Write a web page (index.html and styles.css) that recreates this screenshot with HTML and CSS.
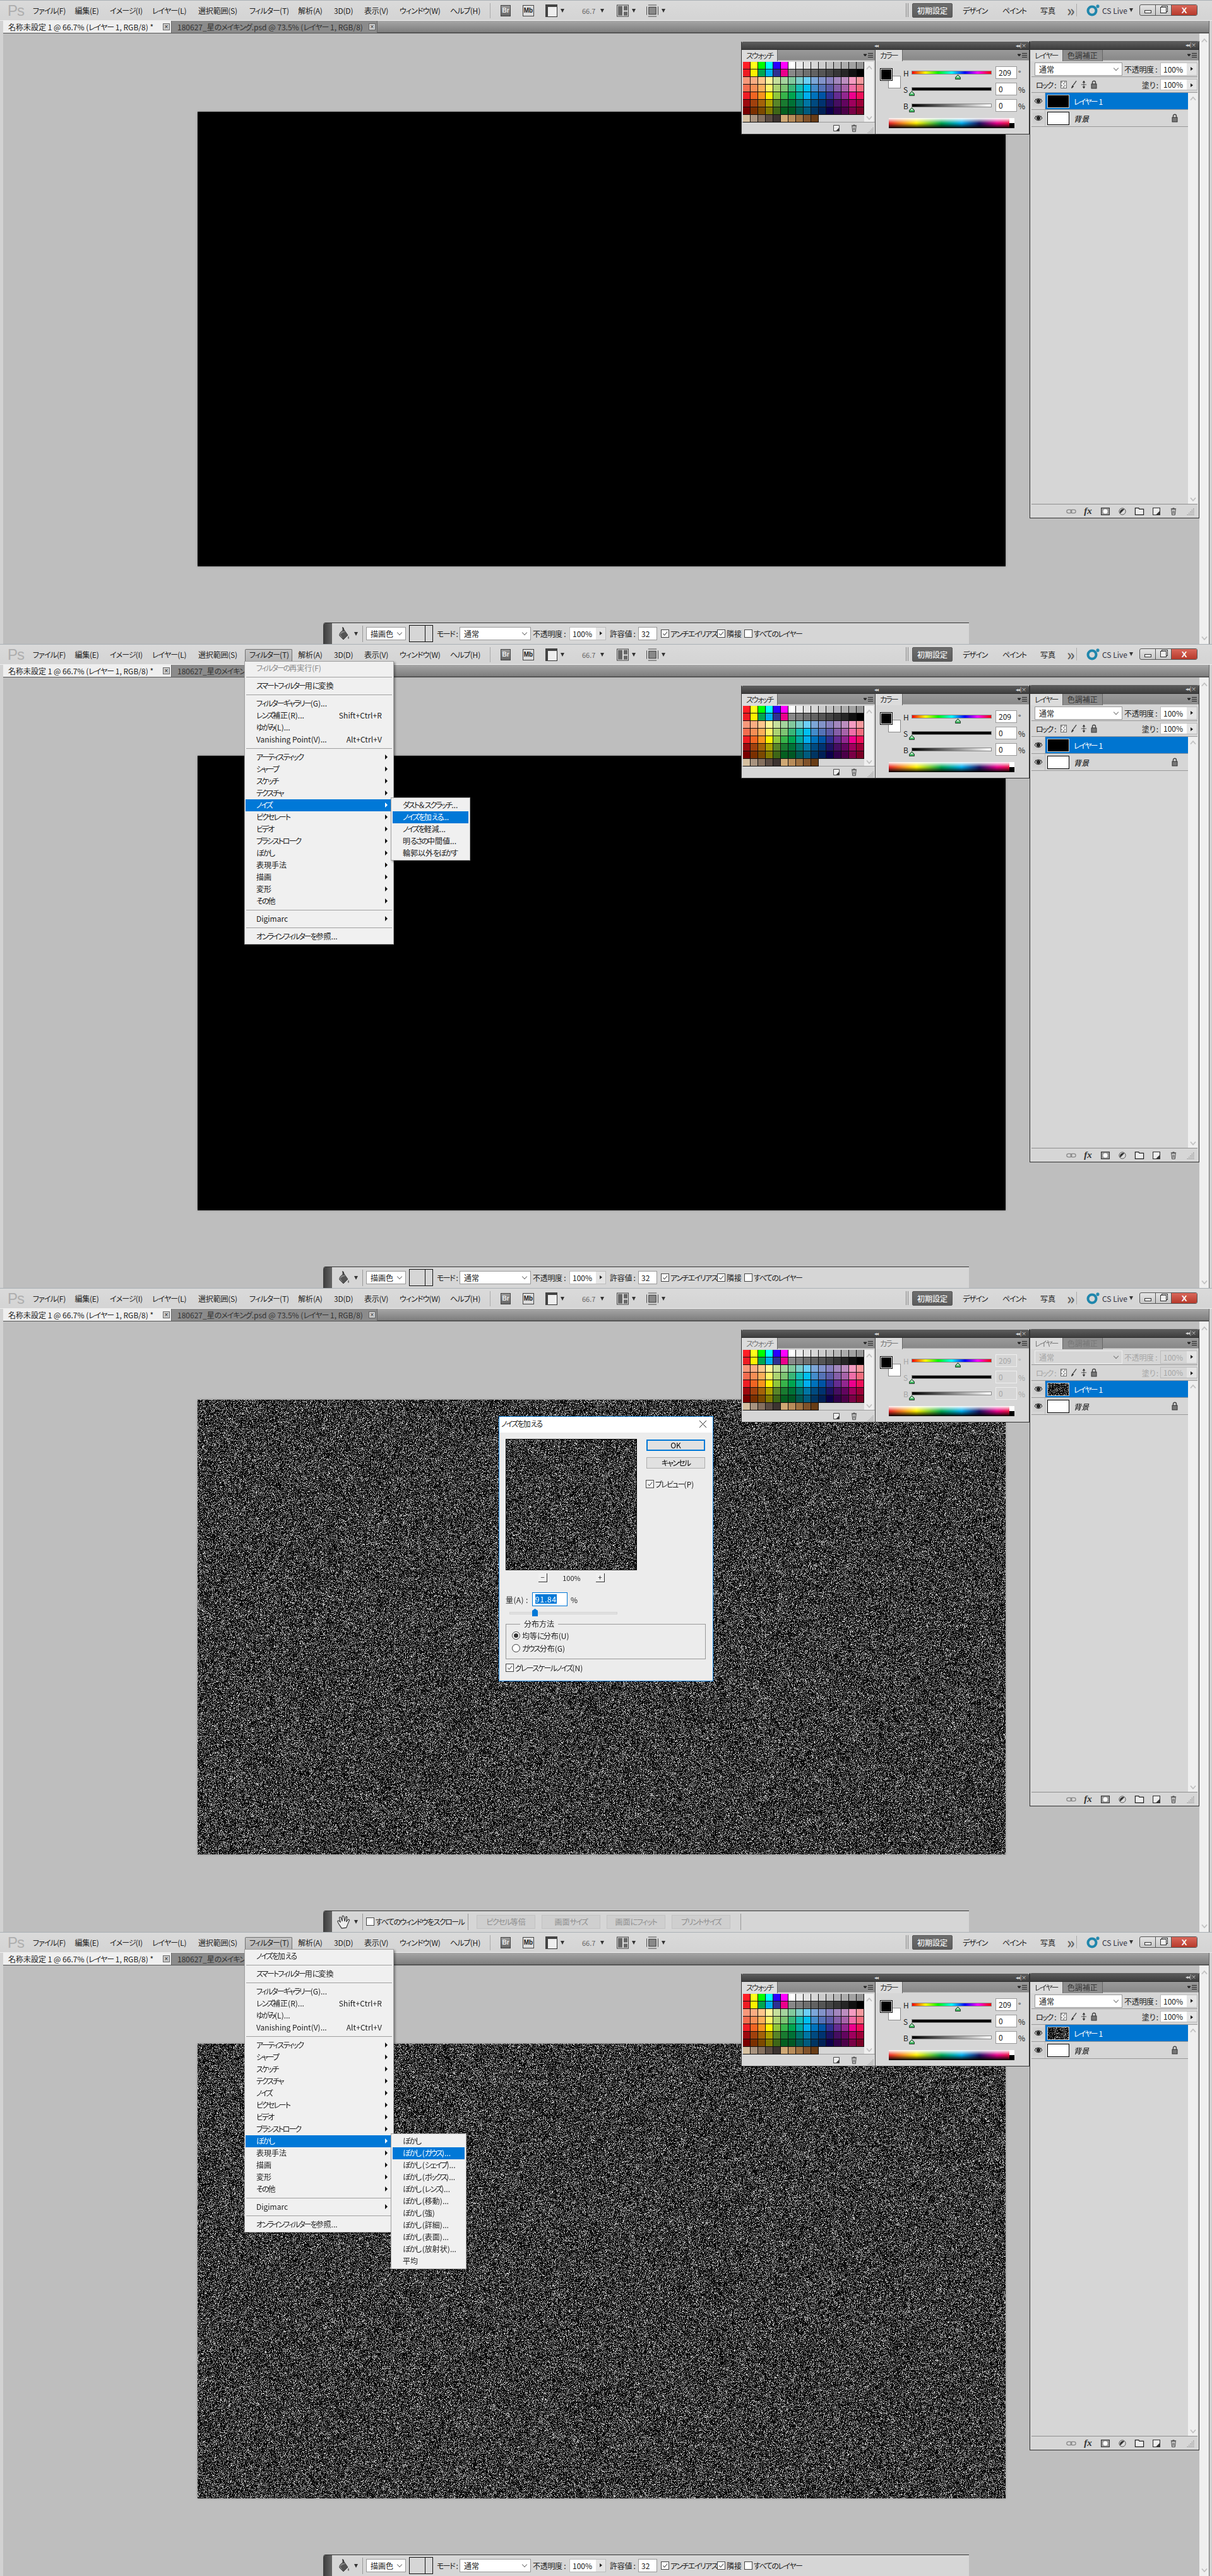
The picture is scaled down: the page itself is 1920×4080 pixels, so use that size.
FILE: index.html
```html
<!DOCTYPE html>
<html lang="ja">
  <head>
    <meta charset="UTF-8" />
    <title>Photoshop ノイズ</title>
    <link rel="stylesheet" href="styles.css">
  </head>
  <body>
    <!-- shared icons -->
    <svg class="icon-defs" width="0" height="0">
      <symbol id="i-bucket" viewBox="0 0 20 24">
        <path d="M9 2 L12 7 L17 14 L10 21 L4 15 C3 12 6 8 9 7 Z" fill="#8b8b8b" stroke="#333" />
        <path d="M5 13 C8 10 11 9 13 9 L17 14 L10 21 Z" fill="#555" />
        <path d="M8 2 C10 1 11 3 10 8" fill="none" stroke="#222" />
        <path d="M18 15 C19 17 20 19 18 20 C16 19 17 17 18 15 Z" fill="#777" />
      </symbol>
      <symbol id="i-hand" viewBox="0 0 24 24">
        <path d="M7 20 C5 17 2 13 2 11 C3 9 5 10 7 13 L5 5 C5 3 7 3 8 5 L10 11 L10 3 C10 1 12 1 13 3 L14 11 L16 4 C17 2 19 3 18 5 L17 12 L20 8 C22 7 23 9 22 10 C20 14 19 18 17 22 L9 23 Z" fill="#eee" stroke="#333" stroke-width="1.2" />
      </symbol>
      <symbol id="i-eye" viewBox="0 0 14 14">
        <path d="M1 7 C4 2 10 2 13 7 C10 12 4 12 1 7 Z" fill="#bbb" stroke="#222" />
        <circle cx="7" cy="7" r="3" fill="#222" />
        <path d="M2 4 L4 5 M12 4 L10 5" stroke="#222" />
      </symbol>
      <symbol id="i-lock" viewBox="0 0 10 14">
        <path d="M2.5 6 V3.5 C2.5 0.5 7.5 0.5 7.5 3.5 V6" fill="none" stroke="#444" stroke-width="1.4" />
        <rect x="1" y="6" width="8" height="7" fill="#777" stroke="#333" />
      </symbol>
      <symbol id="i-brush" viewBox="0 0 12 16">
        <path d="M11 1 L5 9" stroke="#444" stroke-width="1.6" />
        <path d="M4 9 L6 11 C5 14 3 15 1 15 C2 13 2 11 4 9 Z" fill="#333" />
      </symbol>
      <symbol id="i-move" viewBox="0 0 12 16">
        <path d="M6 1 L6 15 M1 8 L11 8 M6 1 L4 4 L8 4 Z M6 15 L4 12 L8 12 Z" fill="#333" stroke="#333" />
      </symbol>
      <symbol id="i-link" viewBox="0 0 18 10">
        <rect x="1" y="2" width="9" height="6" rx="3" fill="none" stroke="#888" stroke-width="1.4" />
        <rect x="8" y="2" width="9" height="6" rx="3" fill="none" stroke="#888" stroke-width="1.4" />
      </symbol>
      <symbol id="i-mask" viewBox="0 0 14 12">
        <rect x="0.5" y="0.5" width="13" height="11" fill="#999" stroke="#333" />
        <circle cx="7" cy="6" r="3.5" fill="#fff" />
      </symbol>
      <symbol id="i-adjust" viewBox="0 0 14 14">
        <circle cx="7" cy="7" r="6" fill="#ddd" stroke="#444" />
        <path d="M11 3 A6 6 0 0 0 3 11 Z" fill="#333" />
      </symbol>
      <symbol id="i-folder" viewBox="0 0 12 10">
        <path d="M0.5 9.5 V0.5 H5 L6 2 H11.5 V9.5 Z" fill="#eee" stroke="#222" />
      </symbol>
      <symbol id="i-new" viewBox="0 0 11 11">
        <path d="M0.5 0.5 H10.5 V10.5 H0.5 Z" fill="#eee" stroke="#333" />
        <path d="M5 10 L10 5 V10 Z" fill="#333" />
      </symbol>
      <symbol id="i-trash" viewBox="0 0 11 13">
        <path d="M2 3 H9 L8 12.5 H3 Z" fill="#eee" stroke="#333" />
        <path d="M1 2 H10 M4 1 H7 M4.5 5 V11 M6.5 5 V11" stroke="#333" />
      </symbol>
      <symbol id="i-grip" viewBox="0 0 10 10">
        <path d="M9 1 V2 M7 3 V4 M9 3 V4 M5 5 V6 M7 5 V6 M9 5 V6 M3 7 V8 M5 7 V8 M7 7 V8 M9 7 V8 M1 9 V10 M3 9 V10 M5 9 V10 M7 9 V10 M9 9 V10" stroke="#888" />
      </symbol>
      <symbol id="i-up" viewBox="0 0 10 6"><path d="M1 5.5 L5 1 L9 5.5" fill="none" stroke="#c2c2c2" stroke-width="1.8" /></symbol>
      <symbol id="i-down" viewBox="0 0 10 6"><path d="M1 0.5 L5 5 L9 0.5" fill="none" stroke="#c2c2c2" stroke-width="1.8" /></symbol>
      <symbol id="i-thumb" viewBox="0 0 9 8"><path d="M4.5 0.5 L8.5 4.5 V7.5 H0.5 V4.5 Z" fill="#38b35a" stroke="#222" stroke-width="0.8" /><path d="M4.5 2 L7 4.5 H2 Z" fill="#eee" /></symbol>
      <symbol id="i-check" viewBox="0 0 13 13"><path d="M2.5 6.5 L5.5 9.5 L11 3" fill="none" stroke="#444" stroke-width="1.2" /></symbol>
      <symbol id="i-panel-menu" viewBox="0 0 16 8"><path d="M0 2 H5 L2.5 5 Z M7 0.5 H15 M7 3.5 H15 M7 6.5 H15" fill="#222" stroke="#222" stroke-width="1" /></symbol>
      <symbol id="i-layout" viewBox="0 0 19 19">
        <rect x="0.5" y="0.5" width="18" height="18" fill="#ddd" stroke="#444" />
        <rect x="2" y="2" width="7" height="15" fill="#666" />
        <rect x="11" y="2" width="6" height="7" fill="#666" />
        <rect x="11" y="11" width="6" height="6" fill="#666" />
      </symbol>
      <symbol id="i-view" viewBox="0 0 20 20">
        <path d="M3 0.5 H17 M3 19.5 H17 M0.5 3 V17 M19.5 3 V17" stroke="#444" />
        <rect x="4" y="4" width="12" height="12" fill="#888" stroke="#333" />
      </symbol>
      <symbol id="i-screen" viewBox="0 0 19 20">
        <rect x="0.5" y="3.5" width="18" height="16" fill="#eee" stroke="#333" />
        <path d="M0 0 H19 V4 H0 Z M0 4 H4 V20 H0 Z" fill="#444" />
      </symbol>
      <symbol id="i-cslive" viewBox="0 0 22 20">
        <circle cx="9" cy="11" r="6.5" fill="none" stroke="#1f86ac" stroke-width="4" />
        <path d="M18 1 V7 M15 4 H21 M16 2 L20 6 M20 2 L16 6" stroke="#1f86ac" stroke-width="1.2" />
      </symbol>
    </svg>

    <!-- window chrome used by all four shots -->
    <template id="ps-shell">
      <header class="menu-bar">
        <div class="ps-logo">Ps</div>
        <nav class="menu-list">
          <span class="menu-item">ファイル(F)</span>
          <span class="menu-item">編集(E)</span>
          <span class="menu-item">イメージ(I)</span>
          <span class="menu-item">レイヤー(L)</span>
          <span class="menu-item">選択範囲(S)</span>
          <span class="menu-item" data-menu="filter">フィルター(T)</span>
          <span class="menu-item">解析(A)</span>
          <span class="menu-item">3D(D)</span>
          <span class="menu-item">表示(V)</span>
          <span class="menu-item">ウィンドウ(W)</span>
          <span class="menu-item">ヘルプ(H)</span>
        </nav>
        <div class="app-tools">
          <span class="app-badge">Br</span>
          <span class="app-badge app-badge-light">Mb</span>
          <span class="app-tool"><svg class="tool-glyph"><use href="#i-screen" /></svg><i class="caret"></i></span>
          <span class="app-tool zoom-value">66.7<i class="caret"></i></span>
          <span class="app-tool"><svg class="tool-glyph"><use href="#i-layout" /></svg><i class="caret"></i></span>
          <span class="app-tool"><svg class="tool-glyph"><use href="#i-view" /></svg><i class="caret"></i></span>
        </div>
        <div class="workspace-switch">
          <span class="grip-bars"></span>
          <span class="workspace-current">初期設定</span>
          <span class="workspace-name">デザイン</span>
          <span class="workspace-name">ペイント</span>
          <span class="workspace-name">写真</span>
          <span class="workspace-more">»</span>
          <span class="cs-live"><svg class="cs-icon"><use href="#i-cslive" /></svg>CS Live<i class="caret"></i></span>
          <div class="win-buttons">
            <span class="win-btn"><i class="win-min"></i></span>
            <span class="win-btn"><i class="win-restore"></i></span>
            <span class="win-btn win-close">X</span>
          </div>
        </div>
      </header>

      <div class="doc-area">
        <div class="tab-bar">
          <span class="doc-tab doc-tab-active">名称未設定 1 @ 66.7% (レイヤー 1, RGB/8) * <i class="tab-x">×</i></span>
          <span class="doc-tab">180627_星のメイキング.psd @ 73.5% (レイヤー 1, RGB/8) <i class="tab-x">×</i></span>
        </div>
        <div class="workspace">
          <div class="canvas-area">
            <canvas class="doc-canvas" width="1280" height="720"></canvas>
          </div>
          <div class="v-scroll">
            <svg class="chev"><use href="#i-up" /></svg>
            <svg class="chev"><use href="#i-down" /></svg>
          </div>
        </div>
      </div>

      <!-- swatches + colour -->
      <aside class="panel-dock">
        <div class="panel-head"><span class="collapse">◂◂</span><span class="collapse dock-close">◂◂ | ×</span></div>
        <div class="dock-body">
          <section class="swatch-panel">
            <div class="panel-tabs">
              <span class="panel-tab">スウォッチ</span>
              <svg class="panel-menu"><use href="#i-panel-menu" /></svg>
            </div>
            <div class="swatch-main">
              <div class="swatch-grid"></div>
              <div class="swatch-scroll">
                <svg class="chev"><use href="#i-up" /></svg>
                <svg class="chev"><use href="#i-down" /></svg>
              </div>
            </div>
            <div class="swatch-foot">
              <svg class="foot-icon"><use href="#i-new" /></svg>
              <svg class="foot-icon"><use href="#i-trash" /></svg>
              <svg class="foot-grip"><use href="#i-grip" /></svg>
            </div>
          </section>
          <section class="color-panel">
            <div class="panel-tabs">
              <span class="panel-tab">カラー</span>
              <svg class="panel-menu"><use href="#i-panel-menu" /></svg>
            </div>
            <div class="color-main">
              <div class="color-chips"><i class="chip-bg"></i><i class="chip-fg"></i></div>
              <div class="color-rows">
                <span class="dim-label">H</span>
                <div class="track track-h"><svg class="track-thumb thumb-h"><use href="#i-thumb" /></svg></div>
                <span class="num-box dim-label">209</span><span class="dim-label">°</span>
                <span class="dim-label">S</span>
                <div class="track track-s"><svg class="track-thumb"><use href="#i-thumb" /></svg></div>
                <span class="num-box dim-label">0</span><span class="dim-label">%</span>
                <span class="dim-label">B</span>
                <div class="track track-b"><svg class="track-thumb"><use href="#i-thumb" /></svg></div>
                <span class="num-box dim-label">0</span><span class="dim-label">%</span>
              </div>
            </div>
            <div class="spectrum"><i class="spectrum-end"></i></div>
          </section>
        </div>
      </aside>

      <!-- layers -->
      <aside class="layers-panel">
        <div class="panel-head"><span class="collapse dock-close">◂◂ | ×</span></div>
        <div class="panel-tabs">
          <span class="panel-tab">レイヤー</span>
          <span class="panel-tab panel-tab-off">色調補正</span>
          <svg class="panel-menu"><use href="#i-panel-menu" /></svg>
        </div>
        <div class="layer-controls">
          <span class="field field-blend dim-label">通常<i class="select-arrow"></i></span>
          <span class="dim-label opacity-label">不透明度 :</span>
          <span class="spin"><b class="dim-label">100%</b><i></i></span>
        </div>
        <div class="layer-locks">
          <span class="dim-label">ロック :</span>
          <i class="lock-pixels"></i>
          <svg class="lock-icon"><use href="#i-brush" /></svg>
          <svg class="lock-icon"><use href="#i-move" /></svg>
          <svg class="lock-icon"><use href="#i-lock" /></svg>
          <span class="dim-label fill-label">塗り :</span>
          <span class="spin"><b class="dim-label">100%</b><i></i></span>
        </div>
        <div class="layer-list">
          <div class="layer-rows">
            <div class="layer-row layer-row-active">
              <span class="layer-eye"><svg><use href="#i-eye" /></svg></span>
              <div class="layer-main">
                <canvas class="layer-thumb" width="33" height="19"></canvas>
                <span class="layer-name">レイヤー 1</span>
              </div>
            </div>
            <div class="layer-row">
              <span class="layer-eye"><svg><use href="#i-eye" /></svg></span>
              <div class="layer-main">
                <span class="layer-thumb layer-thumb-white"></span>
                <span class="layer-name">背景</span>
                <svg class="layer-lock"><use href="#i-lock" /></svg>
              </div>
            </div>
          </div>
          <div class="list-scroll">
            <svg class="chev"><use href="#i-up" /></svg>
            <svg class="chev"><use href="#i-down" /></svg>
          </div>
        </div>
        <div class="layers-foot">
          <svg><use href="#i-link" /></svg>
          <span class="fx-mark">fx</span>
          <svg><use href="#i-mask" /></svg>
          <svg><use href="#i-adjust" /></svg>
          <svg><use href="#i-folder" /></svg>
          <svg><use href="#i-new" /></svg>
          <svg><use href="#i-trash" /></svg>
          <svg><use href="#i-grip" /></svg>
        </div>
      </aside>
    </template>

    <!-- floating option bars -->
    <template id="opt-bucket">
      <div class="option-bar">
        <span class="opt-grip"></span>
        <span class="opt-tool"><svg><use href="#i-bucket" /></svg><i class="caret"></i></span>
        <span class="opt-sep"></span>
        <span class="field opt-source">描画色<i class="select-arrow"></i></span>
        <span class="opt-pattern"><i></i></span>
        <span class="opt-label opt-mode">モード :</span>
        <span class="field opt-blend">通常<i class="select-arrow"></i></span>
        <span class="opt-label opt-opacity">不透明度 :</span>
        <span class="spin opt-spin"><b>100%</b><i></i></span>
        <span class="opt-label opt-tol">許容値 :</span>
        <span class="field opt-num">32</span>
        <span class="opt-check opt-anti"><i class="check-box is-on"><svg><use href="#i-check" /></svg></i>アンチエイリアス</span>
        <span class="opt-check opt-adj"><i class="check-box is-on"><svg><use href="#i-check" /></svg></i>隣接</span>
        <span class="opt-check opt-all"><i class="check-box"></i>すべてのレイヤー</span>
      </div>
    </template>
    <template id="opt-hand">
      <div class="option-bar">
        <span class="opt-grip"></span>
        <span class="opt-tool"><svg><use href="#i-hand" /></svg><i class="caret"></i></span>
        <span class="opt-sep"></span>
        <span class="opt-check opt-scroll"><i class="check-box"></i>すべてのウィンドウをスクロール</span>
        <span class="opt-sep opt-sep-wide"></span>
        <span class="opt-btn">ピクセル等倍</span>
        <span class="opt-btn">画面サイズ</span>
        <span class="opt-btn">画面にフィット</span>
        <span class="opt-btn">プリントサイズ</span>
        <span class="opt-sep opt-sep-end"></span>
      </div>
    </template>

    <!-- フィルター menu -->
    <template id="filter-menu">
      <div class="pop-menu filter-menu">
        <div class="pop-item last-filter"></div>
        <div class="pop-sep"></div>
        <div class="pop-item">スマートフィルター用に変換</div>
        <div class="pop-sep"></div>
        <div class="pop-item">フィルターギャラリー(G)...</div>
        <div class="pop-item">レンズ補正(R)...<span class="shortcut">Shift+Ctrl+R</span></div>
        <div class="pop-item">ゆがみ(L)...</div>
        <div class="pop-item">Vanishing Point(V)...<span class="shortcut">Alt+Ctrl+V</span></div>
        <div class="pop-sep"></div>
        <div class="pop-item has-sub">アーティスティック</div>
        <div class="pop-item has-sub">シャープ</div>
        <div class="pop-item has-sub">スケッチ</div>
        <div class="pop-item has-sub">テクスチャ</div>
        <div class="pop-item has-sub">ノイズ</div>
        <div class="pop-item has-sub">ピクセレート</div>
        <div class="pop-item has-sub">ビデオ</div>
        <div class="pop-item has-sub">ブラシストローク</div>
        <div class="pop-item has-sub">ぼかし</div>
        <div class="pop-item has-sub">表現手法</div>
        <div class="pop-item has-sub">描画</div>
        <div class="pop-item has-sub">変形</div>
        <div class="pop-item has-sub">その他</div>
        <div class="pop-sep"></div>
        <div class="pop-item has-sub">Digimarc</div>
        <div class="pop-sep"></div>
        <div class="pop-item">オンラインフィルターを参照...</div>
      </div>
    </template>

    <section class="ps-window" data-tool="opt-bucket"></section>

    <section class="ps-window" data-tool="opt-bucket" data-last-filter="フィルターの再実行(F)" data-last-off="1" data-open="ノイズ">
      <div class="pop-menu sub-menu sub-noise">
        <div class="pop-item">ダスト＆スクラッチ...</div>
        <div class="pop-item is-active">ノイズを加える...</div>
        <div class="pop-item">ノイズを軽減...</div>
        <div class="pop-item">明るさの中間値...</div>
        <div class="pop-item">輪郭以外をぼかす</div>
      </div>
    </section>

    <section class="ps-window is-modal" data-tool="opt-hand" data-noise="1">
      <div class="noise-dialog">
        <div class="dialog-title">ノイズを加える<span class="dialog-x"></span></div>
        <div class="dialog-body">
          <div class="dialog-top">
            <div class="dialog-left">
              <canvas class="noise-preview" width="206" height="206"></canvas>
              <div class="preview-zoom">
                <span class="zoom-btn">−</span><span>100%</span><span class="zoom-btn">+</span>
              </div>
              <div class="amount-row">
                <label class="amount-label">量(A) :</label>
                <span class="amount-input"><b>91.84</b></span>
                <span class="amount-unit">%</span>
              </div>
              <div class="amount-slider"><i></i></div>
            </div>
            <div class="dialog-right">
              <button class="dlg-btn dlg-btn-ok">OK</button>
              <button class="dlg-btn">キャンセル</button>
              <div class="dlg-check"><i class="check-box is-on"><svg><use href="#i-check" /></svg></i>プレビュー(P)</div>
            </div>
          </div>
          <fieldset class="dist-group">
            <legend>分布方法</legend>
            <div class="dlg-radio"><i class="radio is-on"></i>均等に分布(U)</div>
            <div class="dlg-radio"><i class="radio"></i>ガウス分布(G)</div>
          </fieldset>
          <div class="dlg-check dlg-check-gray"><i class="check-box is-on"><svg><use href="#i-check" /></svg></i>グレースケールノイズ(N)</div>
        </div>
      </div>
    </section>

    <section class="ps-window" data-tool="opt-bucket" data-noise="1" data-last-filter="ノイズを加える" data-open="ぼかし">
      <div class="pop-menu sub-menu sub-blur">
        <div class="pop-item">ぼかし</div>
        <div class="pop-item is-active">ぼかし (ガウス)...</div>
        <div class="pop-item">ぼかし (シェイプ)...</div>
        <div class="pop-item">ぼかし (ボックス)...</div>
        <div class="pop-item">ぼかし (レンズ)...</div>
        <div class="pop-item">ぼかし (移動)...</div>
        <div class="pop-item">ぼかし (強)</div>
        <div class="pop-item">ぼかし (詳細)...</div>
        <div class="pop-item">ぼかし (表面)...</div>
        <div class="pop-item">ぼかし (放射状)...</div>
        <div class="pop-item">平均</div>
      </div>
    </section>

    <script src="script.js"></script>
  </body>
</html>
```

FILE: styles.css
```css
* {
  box-sizing: border-box;
  margin: 0;
  padding: 0;
}

body {
  width: 1920px;
  background: #bebebe;
  font-family: 'Noto Sans CJK JP', 'Liberation Sans', sans-serif;
  font-size: 12px;
  font-feature-settings: 'palt';
  color: #222;
}

i {
  font-style: normal;
}

/* kana runs are narrower than kanji in this UI font */
.kana {
  letter-spacing: var(--kana-gap, -1.8px);
}

.icon-defs {
  position: absolute;
}

.ps-window {
  position: relative;
  display: flex;
  flex-direction: column;
  width: 1920px;
  height: 1020px;
  overflow: hidden;
  background: #d2d2d2;
  white-space: nowrap;
}

/* menu bar */
.menu-bar {
  display: flex;
  align-items: center;
  height: 33px;
  background: linear-gradient(#dadada, #d4d4d4);
  border-top: 1px solid #a9b0b5;
  border-bottom: 1px solid #eee;
}

.ps-logo {
  width: 23px;
  margin-left: 12px;
  font-family: 'Liberation Sans', sans-serif;
  font-size: 24px;
  letter-spacing: -1px;
  line-height: 1;
  color: #aeaeae;
}

.menu-list {
  --kana-gap: -0.9px;
  display: grid;
  grid-template-columns: 49px 39px 50px 54px 66px 59px 41px 30px 40px 63px 48px;
  column-gap: 17px;
  margin-left: 17px;
  align-items: center;
  height: 100%;
}

.menu-item {
  position: relative;
  z-index: 0;
  line-height: 31px;
  text-align: center;
  letter-spacing: -0.2px;
}

.menu-item.is-open::before {
  content: '';
  position: absolute;
  z-index: -1;
  top: 7px;
  left: -7px;
  right: -9px;
  height: 19px;
  background: linear-gradient(#c4c4c4, #b4b4b4);
  border: 1px solid #6f6f6f;
  border-bottom: 0;
  border-radius: 2px 2px 0 0;
}

.app-tools {
  display: grid;
  grid-template-columns: 35px 36px 58px 55px 47px 60px;
  margin-left: 15px;
  align-items: center;
  border-left: 1px solid #aaa;
  height: 24px;
  padding-left: 16px;
}

.app-badge {
  width: 16px;
  height: 18px;
  border: 1px solid #444;
  background: linear-gradient(#999, #666);
  color: #e8e8e8;
  font: bold 10px/16px 'Liberation Sans', sans-serif;
  text-align: center;
}

.app-badge-light {
  width: 18px;
  background: #ddd;
  color: #222;
}

.app-tool {
  display: flex;
  align-items: center;
  gap: 5px;
}

.tool-glyph {
  width: 19px;
  height: 20px;
}

.zoom-value {
  color: #666;
  font-size: 11px;
  gap: 8px;
}

.caret {
  display: inline-block;
  border-top: 6px solid #333;
  border-left: 3px solid transparent;
  border-right: 3px solid transparent;
}

.workspace-switch {
  --kana-gap: -1.2px;
  position: absolute;
  left: 1435px;
  top: 0;
  display: grid;
  grid-template-columns: 10px 80px 63px 60px 42px 30px 85px 92px;
  align-items: center;
  height: 32px;
}

.grip-bars {
  width: 4px;
  height: 22px;
  border-left: 1px solid #888;
  border-right: 1px solid #888;
}

.workspace-current {
  width: 64px;
  height: 23px;
  background: linear-gradient(#6e6e6e, #5c5c5c);
  border: 1px solid #555;
  border-radius: 2px;
  color: #f2f2f2;
  text-align: center;
  line-height: 21px;
  font-weight: 500;
}

.workspace-more {
  font-size: 24px;
  line-height: 28px;
  color: #666;
  font-weight: 700;
}

.cs-live {
  display: flex;
  align-items: center;
  gap: 3px;
  padding-left: 15px;
  margin-left: -15px;
  border-left: 1px solid #aaa;
  color: #334;
  font-size: 12px;
}

.cs-icon {
  width: 22px;
  height: 20px;
}

.win-buttons {
  display: flex;
  height: 18px;
  border: 1px solid #555;
  border-radius: 3px;
  overflow: hidden;
  background: linear-gradient(#e4e4e4, #c8c8c8);
}

.win-btn {
  display: flex;
  align-items: center;
  justify-content: center;
  width: 25px;
  border-right: 1px solid #555;
}

.win-min {
  width: 11px;
  height: 5px;
  background: #fff;
  border: 1px solid #333;
  margin-top: 4px;
}

.win-restore {
  width: 10px;
  height: 10px;
  background: #eee;
  border: 1px solid #333;
  box-shadow: 2px -2px 0 -1px #eee, 2px -2px 0 0 #333;
}

.win-close {
  flex: 1;
  border: 0;
  background: linear-gradient(#d9675a, #b73a2c);
  color: #fff;
  font: bold 13px/1 'Liberation Sans', sans-serif;
}

/* document area */
.doc-area {
  display: flex;
  flex-direction: column;
  flex: 1;
  margin: 0 4px 0 5px;
  border-right: 1px solid #666;
}

.tab-bar {
  --kana-gap: -1px;
  display: flex;
  height: 20px;
  background: linear-gradient(#a6a6a6, #7e7e7e);
  border-bottom: 2px solid #555;
  flex: none;
}

.doc-tab {
  display: flex;
  align-items: center;
  padding: 0 2px 0 9px;
  background: #8b8b8b;
  color: #333;
  border-right: 1px solid #666;
  height: 19px;
  width: 326px;
  justify-content: space-between;
  font-size: 12px;
}

.doc-tab-active {
  width: 267px;
  background: #efefef;
  color: #222;
  padding-left: 8px;
}

.tab-x {
  width: 11px;
  height: 11px;
  border: 1px solid #666;
  background: #ccc;
  font: 10px/9px 'Liberation Sans', sans-serif;
  text-align: center;
  letter-spacing: 0;
  flex: none;
}

.workspace {
  display: flex;
  flex: 1;
  min-height: 0;
}

.canvas-area {
  display: flex;
  flex: 1;
  align-items: center;
  justify-content: center;
  background: #bebebe;
}

.doc-canvas {
  display: block;
  width: 1280px;
  height: 720px;
  background: #000;
  box-shadow: 0 0 3px rgba(0, 0, 0, 0.35);
  filter: blur(0.4px);
}

.v-scroll {
  display: flex;
  flex-direction: column;
  align-items: center;
  justify-content: space-between;
  width: 15px;
  padding: 8px 0 6px;
  background: #efefef;
}

.chev {
  width: 10px;
  height: 6px;
  flex: none;
}

/* panels */
.panel-dock {
  position: absolute;
  left: 1174px;
  top: 66px;
  width: 457px;
  height: 147px;
  background: #d6d6d6;
  border: 1px solid #333;
  border-top: 0;
  display: flex;
  flex-direction: column;
}

.panel-head {
  position: relative;
  display: flex;
  justify-content: center;
  height: 12px;
  flex: none;
  background: linear-gradient(#5e5e5e, #3e3e3e);
  border-radius: 2px 2px 0 0;
  color: #d8d8d8;
  font-size: 8px;
  line-height: 12px;
  padding-right: 30px;
}

.collapse {
  letter-spacing: -1px;
}

.dock-close {
  position: absolute;
  right: 5px;
  top: 0;
}

.dock-body {
  display: flex;
  flex: 1;
  min-height: 0;
}

.panel-tabs {
  position: relative;
  display: flex;
  flex: none;
  height: 18px;
  background: linear-gradient(#9a9a9a, #888);
  border-top: 1px solid #2c2c2c;
  border-bottom: 1px solid #aaa;
}

.panel-tab {
  padding: 0 7px;
  height: 18px;
  background: #dcdcdc;
  line-height: 17px;
  border-right: 1px solid #666;
  color: #333;
}

.panel-tab-off {
  background: #8c8c8c;
  color: #333;
}

.panel-menu {
  position: absolute;
  right: 2px;
  top: 5px;
  width: 16px;
  height: 8px;
}

.swatch-panel {
  display: flex;
  flex-direction: column;
  width: 212px;
  border-right: 1px solid #444;
}

.swatch-main {
  display: flex;
  height: 98px;
  flex: none;
  padding: 2px 0 0 2px;
  border-bottom: 1px solid #999;
}

.swatch-grid {
  display: grid;
  grid-template-columns: repeat(16, 12px);
  grid-auto-rows: 12px;
  width: 192px;
}

.swatch {
  border-right: 1px solid #111;
  border-bottom: 1px solid #111;
}

.swatch-scroll {
  display: flex;
  flex-direction: column;
  align-items: center;
  justify-content: space-between;
  width: 15px;
  padding: 6px 0 3px;
  background: #efefef;
}

.swatch-foot {
  display: flex;
  align-items: center;
  justify-content: flex-end;
  gap: 18px;
  flex: 1;
  padding-right: 2px;
}

.foot-icon {
  width: 10px;
  height: 12px;
}

.foot-grip {
  width: 10px;
  height: 10px;
  margin: 6px 0 0 -2px;
}

.color-panel {
  flex: 1;
}

.color-main {
  display: flex;
  padding: 9px 0 0 7px;
}

.color-chips {
  position: relative;
  width: 33px;
  height: 33px;
  margin-top: 3px;
  flex: none;
}

.chip-fg,
.chip-bg {
  position: absolute;
  width: 20px;
  height: 20px;
  border: 1px solid #000;
  box-shadow: inset 0 0 0 1px #fff;
  background: #000;
}

.chip-fg {
  top: 0;
  left: 0;
}

.chip-bg {
  left: 13px;
  top: 12px;
  background: #fff;
  border-color: #888;
  box-shadow: none;
}

.color-rows {
  display: grid;
  grid-template-columns: 13px 127px 40px 18px;
  grid-auto-rows: 20px;
  row-gap: 6px;
  align-items: center;
  margin-left: 4px;
}

.color-rows .num-box {
  margin-left: 6px;
  width: 34px;
}

.color-rows > span:nth-child(4n) {
  margin-left: 2px;
}

.track {
  position: relative;
  height: 6px;
  border: 1px solid #888;
}

.track-h {
  background: linear-gradient(to right, #f00, #ff0 17%, #0f0 33%, #0ff 50%, #00f 67%, #f0f 83%, #f00);
}

.track-s {
  background: #000;
}

.track-b {
  background: linear-gradient(to right, #000, #fff);
}

.track-thumb {
  position: absolute;
  left: -5px;
  top: 5px;
  width: 9px;
  height: 8px;
}

.thumb-h {
  left: 68px;
}

.num-box {
  height: 20px;
  padding-left: 4px;
  line-height: 18px;
  background: #fff;
  border: 1px solid #999;
}

.spectrum {
  position: relative;
  width: 199px;
  height: 16px;
  margin: 10px 0 0 21px;
  background:
    linear-gradient(to bottom, #fff, rgba(255, 255, 255, 0) 50%, rgba(0, 0, 0, 0) 50%, #000),
    linear-gradient(to right, #e8232a, #f7941d 12%, #fff200 22%, #00a651 42%, #00aeef 58%, #1b1464 72%, #ec008c 86%, #ed1c24);
}

.spectrum-end {
  position: absolute;
  right: 0;
  top: 0;
  width: 8px;
  height: 16px;
  background: linear-gradient(#fff 50%, #000 50%);
}

.layers-panel {
  position: absolute;
  left: 1631px;
  top: 65px;
  display: flex;
  flex-direction: column;
  width: 269px;
  height: 756px;
  background: #d6d6d6;
  border: 1px solid #333;
  border-top: 0;
}

.layers-panel .panel-head {
  height: 13px;
}

.layer-controls {
  display: flex;
  align-items: center;
  height: 26px;
  padding: 1px 0 0 5px;
  margin: 0 2px;
  border-bottom: 1px solid #999;
  flex: none;
}

.field {
  position: relative;
  display: block;
  height: 21px;
  padding-left: 6px;
  line-height: 19px;
  background: #fff;
  border: 1px solid #999;
}

.field-blend {
  width: 139px;
}

.select-arrow {
  position: absolute;
  right: 6px;
  top: 5px;
  width: 6px;
  height: 6px;
  border-right: 1px solid #777;
  border-bottom: 1px solid #777;
  transform: rotate(45deg);
}

.opacity-label {
  width: 57px;
  margin-left: 3px;
  letter-spacing: -0.3px;
}

.spin {
  display: flex;
  width: 59px;
  height: 21px;
  border: 1px solid #bbb;
  background: #e4e4e4;
}

.spin b {
  width: 41px;
  padding-left: 4px;
  font-weight: 400;
  line-height: 19px;
  background: #fff;
  font-size: 12px;
}

.spin i {
  position: relative;
  flex: 1;
}

.spin i::after {
  content: '';
  position: absolute;
  left: 6px;
  top: 6px;
  border-left: 4px solid #222;
  border-top: 3px solid transparent;
  border-bottom: 3px solid transparent;
}

.layer-locks {
  display: flex;
  align-items: center;
  gap: 6px;
  height: 25px;
  padding-left: 7px;
  margin: 0 2px;
  border-bottom: 1px solid #999;
  flex: none;
}

.lock-pixels {
  width: 10px;
  height: 12px;
  border: 1px solid #666;
  background: repeating-conic-gradient(#fff 0 25%, #aaa 0 50%) 0 0 / 5px 5px;
}

.lock-icon {
  width: 10px;
  height: 14px;
}

.fill-label {
  margin-left: auto;
  margin-right: -3px;
}

.layer-locks .spin {
  height: 18px;
}

.layer-locks .spin b {
  line-height: 16px;
}

.layer-list {
  display: flex;
  flex: 1;
  margin: 0 2px;
  border-bottom: 1px solid #8e8e8e;
}

.layer-rows {
  flex: 1;
}

.layer-row {
  display: flex;
  height: 27px;
  border-bottom: 1px solid #999;
}

.layer-eye {
  display: flex;
  align-items: center;
  justify-content: center;
  width: 22px;
  border-right: 1px solid #bbb;
}

.layer-eye svg {
  width: 14px;
  height: 14px;
  outline: 2px solid #cfcfcf;
  background: #cfcfcf;
}

.layer-main {
  display: flex;
  flex: 1;
  align-items: center;
  padding-left: 3px;
}

.layer-row-active .layer-main {
  background: #0075d0;
  color: #fff;
}

.layer-thumb {
  display: block;
  width: 35px;
  height: 21px;
  background: #000;
  border: 1px solid #fff;
  flex: none;
}

canvas.layer-thumb {
  filter: blur(0.5px) brightness(0.8);
}

.layer-thumb-white {
  background: #fff;
  border-color: #000;
}

.layer-name {
  margin-left: 7px;
}

.layer-row:not(.layer-row-active) .layer-name {
  font-style: italic;
  font-weight: 500;
}

.layer-lock {
  width: 10px;
  height: 14px;
  margin-left: auto;
  margin-right: 16px;
}

.list-scroll {
  display: flex;
  flex-direction: column;
  align-items: center;
  justify-content: space-between;
  width: 15px;
  padding: 6px 0 4px;
  background: #efefef;
}

.layers-foot {
  display: grid;
  grid-template-columns: repeat(8, 27px);
  align-items: center;
  justify-items: center;
  justify-content: end;
  height: 21px;
  flex: none;
}

.layers-foot svg {
  width: 16px;
  height: 12px;
}

.fx-mark {
  font: italic bold 15px/1 'Liberation Serif', serif;
  color: #333;
}

/* floating option bar */
.option-bar {
  --kana-gap: -1.5px;
  position: absolute;
  left: 512px;
  top: 986px;
  display: flex;
  align-items: center;
  gap: 3px;
  width: 1023px;
  height: 34px;
  background: #d6d6d6;
  border-top: 1px solid #333;
  border-radius: 4px 0 0 0;
}

.opt-grip {
  align-self: stretch;
  width: 14px;
  margin-right: -3px;
  background: linear-gradient(to right, #3c3c3c, #666);
  border-radius: 4px 0 0 0;
}

.opt-tool {
  display: flex;
  align-items: center;
  gap: 6px;
  width: 48px;
  margin-right: -3px;
  padding-left: 7px;
}

.opt-tool svg {
  width: 22px;
  height: 24px;
}

.opt-sep {
  width: 1px;
  height: 26px;
  margin-right: 2px;
  background: #999;
}

.opt-source {
  width: 63px;
}

.opt-pattern {
  display: block;
  width: 38px;
  height: 27px;
  margin: 0 3px 0 2px;
  border: 1px solid #111;
}

.opt-pattern i {
  display: block;
  width: 12px;
  height: 100%;
  margin-left: auto;
  border-left: 1px solid #111;
}

.opt-label {
  letter-spacing: -0.3px;
}

.opt-mode {
  width: 33px;
}

.opt-blend {
  width: 113px;
}

.opt-opacity {
  width: 55px;
}

.opt-spin {
  width: 58px;
}

.opt-tol {
  width: 42px;
  margin-left: 3px;
}

.opt-num {
  width: 30px;
  padding-left: 4px;
}

.opt-check {
  display: flex;
  align-items: center;
  gap: 2px;
}

.opt-anti {
  width: 83px;
  margin-left: 3px;
}

.opt-adj {
  width: 24px;
  margin-left: 3px;
}

.opt-all {
  margin-left: 16px;
}

.opt-scroll {
  width: 150px;
}

.opt-sep-wide {
  margin: 0 10px 0 8px;
}

.opt-sep-end {
  margin-left: 6px;
}

.opt-btn {
  width: 93px;
  height: 22px;
  margin-right: 7px;
  background: #cfcfcf;
  border: 1px solid #c2c2c2;
  color: #8e8e8e;
  text-align: center;
  line-height: 20px;
}

.check-box {
  display: block;
  width: 13px;
  height: 13px;
  background: #fff;
  border: 1px solid #444;
  flex: none;
}

.check-box svg {
  display: block;
  width: 11px;
  height: 11px;
}

/* popup menus */
.pop-menu {
  --kana-gap: -2px;
  position: absolute;
  background: #f0f0f0;
  border: 1px solid #a0a0a0;
  box-shadow: 2px 2px 3px rgba(0, 0, 0, 0.4);
  color: #222;
}

.filter-menu {
  left: 387px;
  top: 27px;
  width: 237px;
  height: 449px;
  padding: 1px;
}

.pop-item {
  position: relative;
  display: flex;
  justify-content: space-between;
  height: 19px;
  padding: 0 17px;
  line-height: 18px;
}

.pop-item.is-active {
  background: #0078d7;
  color: #fff;
}

.has-sub::after {
  content: '';
  position: absolute;
  right: 8px;
  top: 5px;
  border-left: 4px solid #111;
  border-top: 4px solid transparent;
  border-bottom: 4px solid transparent;
}

.has-sub.is-active::after {
  border-left-color: #fff;
}

.last-filter.is-off {
  color: #8a8a8a;
}

.shortcut {
  letter-spacing: 0.1px;
}

.pop-sep {
  display: flex;
  align-items: center;
  height: 9px;
  padding: 0 1px;
}

.pop-sep::before {
  content: '';
  flex: 1;
  height: 1px;
  background: #a0a0a0;
}

.sub-menu {
  padding: 2px 2px 3px;
}

.sub-menu .pop-item {
  padding: 0 16px;
}

.sub-noise {
  left: 619px;
  top: 243px;
  width: 126px;
  height: 100px;
}

.sub-blur {
  left: 619px;
  top: 319px;
  width: 120px;
  height: 215px;
}

/* ノイズ dialog */
.noise-dialog {
  position: absolute;
  left: 790px;
  top: 203px;
  width: 340px;
  height: 420px;
  background: #ececec;
  border: 1px solid #0078d7;
  color: #222;
}

.dialog-title {
  position: relative;
  height: 25px;
  padding-left: 3px;
  background: #fff;
  line-height: 22px;
}

.dialog-x {
  position: absolute;
  right: 10px;
  top: 6px;
  width: 11px;
  height: 11px;
  background:
    linear-gradient(45deg, transparent 46%, #222 46%, #222 54%, transparent 54%),
    linear-gradient(-45deg, transparent 46%, #222 46%, #222 54%, transparent 54%);
}

.dialog-body {
  padding: 10px 11px 0 10px;
}

.dialog-top {
  display: flex;
  gap: 15px;
  height: 282px;
}

.dialog-left {
  width: 208px;
}

.noise-preview {
  display: block;
  width: 208px;
  height: 208px;
  background: #000;
  border: 1px solid #000;
}

.preview-zoom {
  display: flex;
  align-items: center;
  justify-content: space-between;
  height: 14px;
  margin-top: 5px;
  padding: 0 51px 0 52px;
  font-size: 11px;
}

.zoom-btn {
  width: 14px;
  height: 14px;
  background: #f0f0f0;
  border-right: 1px solid #333;
  border-bottom: 1px solid #333;
  line-height: 12px;
  text-align: center;
}

.amount-row {
  display: flex;
  align-items: center;
  margin-top: 16px;
  height: 22px;
}

.amount-label {
  width: 42px;
  letter-spacing: 0.4px;
}

.amount-input {
  display: block;
  width: 56px;
  height: 22px;
  padding: 2px 0 0 4px;
  background: #fff;
  border: 1px solid #0078d7;
  line-height: 15px;
}

.amount-input b {
  display: inline-block;
  background: #0078d7;
  color: #fff;
  font-weight: 400;
  letter-spacing: 0.8px;
}

.amount-unit {
  margin-left: 5px;
}

.amount-slider {
  position: relative;
  width: 171px;
  height: 4px;
  margin: 9px 0 0 6px;
  background: #e2e2e2;
  border: 1px solid #d4d4d4;
}

.amount-slider i {
  position: absolute;
  left: 35px;
  top: -6px;
  width: 9px;
  height: 12px;
  background: #0078d7;
  clip-path: polygon(50% 0, 100% 25%, 100% 100%, 0 100%, 0 25%);
}

.dialog-right {
  display: flex;
  flex-direction: column;
  width: 93px;
  margin-top: 1px;
}

.dlg-btn {
  height: 18px;
  margin-bottom: 10px;
  background: #e1e1e1;
  border: 1px solid #adadad;
  font: inherit;
  font-feature-settings: inherit;
  line-height: 14px;
}

.dlg-btn-ok {
  border: 2px solid #0078d7;
  font-size: 12px;
}

.dlg-check {
  display: flex;
  align-items: center;
  gap: 2px;
  margin: 6px 0 0 -1px;
}

.dist-group {
  height: 64px;
  margin-top: 3px;
  padding: 0 9px;
  border: 1px solid #999;
}

.dist-group legend {
  margin-left: 13px;
  padding: 0 6px;
  line-height: 16px;
}

.dlg-radio {
  display: flex;
  align-items: center;
  gap: 3px;
  height: 20px;
}

.radio {
  position: relative;
  display: block;
  width: 13px;
  height: 13px;
  background: #fff;
  border: 1px solid #333;
  border-radius: 50%;
}

.radio.is-on::after {
  content: '';
  position: absolute;
  inset: 2px;
  background: #333;
  border-radius: 50%;
}

.dlg-check-gray {
  margin: 5px 0 0;
}

/* modal state: panels greyed out */
.is-modal .dim-label {
  color: #a6a6a6;
}

.is-modal .num-box,
.is-modal .field,
.is-modal .spin b {
  background: #d6d6d6;
  border-color: #eee;
}

.is-modal .panel-tab {
  color: #777;
}
```

FILE: script.js
```js
// default Photoshop swatches, row by row
const SWATCHES = [
  'ff1f26 ffff1a 00ff00 00ffff 2a00ff ff00ff ffffff ebebeb e1e1e1 d7d7d7 cccccc c2c2c2 b7b7b7 acacac a1a1a1 959595',
  'ed1c24 fff200 00a651 00aeef 2e3192 ec008c 898989 7d7d7d 707070 626262 555555 464646 363636 262626 111111 000000',
  'f7977a fbad82 fdc68c fff799 c6df9c a4d49d 81ca9d 7bcdc9 6ccff7 7ca6d8 8293ca 8881be a286bd bc8dbf f49bc1 f5999d',
  'f26c4f f68e55 fbaf5a fff467 acd372 7dc473 39b778 16bcb4 00bff3 438ccb 5573b7 5e5ca7 855fa8 a763a9 ef6ea8 f16d7e',
  'ee1d24 f16522 f7941d fff100 8fc63d 37b44a 00a650 00a99e 00aeef 0072bc 0054a5 2f3192 652c91 91278f ed008c ee105a',
  '9d0a0f a1410d a36209 aba000 588528 197b30 007236 00736a 0076a4 004a80 003370 1d1363 450e61 62055f 9e005c 9d0039',
  '790000 7b3000 7c4900 827a00 3e6617 045f20 005824 005951 005b7e 003562 002056 0c004b 30004a 4b0048 7a0045 7a0026',
  'd5bfa0 a8937f 85705f 5b4c43 3c3330 cfa874 b88c5a 9d7040 80522a 683c16',
]

let seed = 180627

// mulberry32
function rand() {
  seed = (seed + 0x6d2b79f5) | 0
  let t = Math.imul(seed ^ (seed >>> 15), 1 | seed)
  t = (t + Math.imul(t ^ (t >>> 7), 61 | t)) ^ t
  return ((t ^ (t >>> 14)) >>> 0) / 4294967296
}

// 91.84% gray uniform noise over black: about half the pixels stay black
function fillNoise(canvas) {
  const ctx = canvas.getContext('2d')
  const img = ctx.createImageData(canvas.width, canvas.height)
  for (let i = 0; i < img.data.length; i += 4) {
    const r = rand()
    const v = r < 0.5 ? 0 : Math.round((r - 0.5) * 2 * 234)
    img.data[i] = v
    img.data[i + 1] = v
    img.data[i + 2] = v
    img.data[i + 3] = 255
  }
  ctx.putImageData(img, 0, 0)
}

function buildSwatches(grid) {
  SWATCHES.join(' ').split(' ').forEach(function (hex) {
    const cell = document.createElement('i')
    cell.className = 'swatch'
    cell.style.background = '#' + hex
    grid.appendChild(cell)
  })
}

function buildWindow(win) {
  const overlays = Array.from(win.children)
  const shell = document.getElementById('ps-shell').content.cloneNode(true)
  const optBar = document.getElementById(win.dataset.tool).content.cloneNode(true)

  buildSwatches(shell.querySelector('.swatch-grid'))

  if (win.dataset.noise) {
    fillNoise(shell.querySelector('.doc-canvas'))
    fillNoise(shell.querySelector('.layer-thumb'))
  }

  win.insertBefore(shell, overlays[0] || null)
  win.insertBefore(optBar, overlays[0] || null)

  if (win.dataset.open) {
    const menu = document.getElementById('filter-menu').content.cloneNode(true)
    const last = menu.querySelector('.last-filter')
    last.textContent = win.dataset.lastFilter
    if (win.dataset.lastOff) last.classList.add('is-off')
    menu.querySelectorAll('.has-sub').forEach(function (item) {
      if (item.textContent === win.dataset.open) item.classList.add('is-active')
    })
    win.querySelector('[data-menu="filter"]').classList.add('is-open')
    win.insertBefore(menu, overlays[0] || null)
  }

  win.querySelectorAll('.noise-preview').forEach(fillNoise)
}

// wrap hiragana / katakana runs so they can be set tighter than kanji.
// the whole text stays in one span, so flex parents still see a single item
function tightenKana(root) {
  const walker = document.createTreeWalker(root, NodeFilter.SHOW_TEXT)
  const nodes = []
  while (walker.nextNode()) {
    if (/[\u3040-\u30ff]/.test(walker.currentNode.nodeValue)) nodes.push(walker.currentNode)
  }
  nodes.forEach(function (node) {
    const label = document.createElement('span')
    node.nodeValue.split(/([\u3040-\u30ff]+)/).forEach(function (part, i) {
      if (!part) return
      if (i % 2) {
        const run = document.createElement('span')
        run.className = 'kana'
        run.textContent = part
        label.appendChild(run)
      } else {
        label.appendChild(document.createTextNode(part))
      }
    })
    node.parentNode.replaceChild(label, node)
  })
}

document.querySelectorAll('.ps-window').forEach(function (win) {
  buildWindow(win)
  tightenKana(win)
})
```
